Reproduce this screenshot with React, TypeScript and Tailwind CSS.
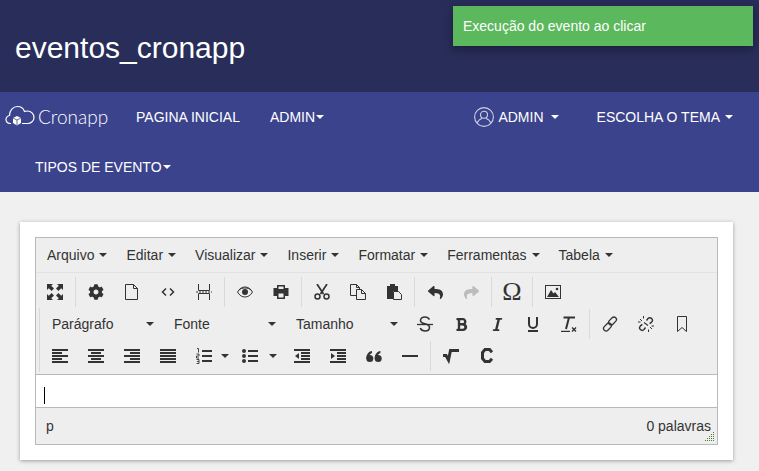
import React from "react";
import { FaCog, FaBold, FaItalic, FaReply } from "react-icons/fa";

const S = ({ children }: { children: React.ReactNode }) => (
  <svg viewBox="0 0 16 16" width={16} height={16} fill="currentColor" className="block">
    {children}
  </svg>
);

const Caret = ({ cls = "" }: { cls?: string }) => (
  <span className={`inline-block w-0 h-0 border-x-[4px] border-x-transparent border-t-[4px] ${cls}`} />
);

const Fullscreen = () => (
  <S>
    {[0, 90, 180, 270].map((r) => (
      <path key={r} transform={`rotate(${r} 8 8)`} d="M0 0h6L4.200 1.800 7 4.600 4.600 7 1.800 4.200 0 6z" />
    ))}
  </S>
);
const NewDoc = () => (
  <S>
    <path d="M1.500.5h8l4 4v11h-12zM9.500.5v4h4" fill="none" stroke="currentColor" />
  </S>
);
const Code = () => (
  <S>
    <path d="M6 4.500 2.500 8 6 11.500M10 4.500 13.500 8 10 11.500" fill="none" stroke="currentColor" strokeWidth="1.500" />
  </S>
);
const PageBreak = () => (
  <S>
    <path d="M2.500 0v6.500h11V0M2.500 16V9.500h11V16" fill="none" stroke="currentColor" />
    <path d="M0 8h16" stroke="currentColor" strokeDasharray="2 1" fill="none" />
  </S>
);
const Eye = () => (
  <S>
    <path d="M.5 8C2.500 4.500 5 3 8 3s5.500 1.500 7.500 5c-2 3.500-4.500 5-7.500 5S2.500 11.500.5 8z" fill="none" stroke="currentColor" />
    <path d="M1.500 6.500C3.500 4.500 5.500 4 8 4s4.500.5 6.500 2.500" fill="none" stroke="currentColor" />
    <circle cx="8" cy="8" r="3" />
  </S>
);
const Print = () => (
  <S>
    <path d="M4 1h8v3h3.500v8H12v3H4v-3H.5V4H4zM5.500 2.500V5h5V2.500zM5.500 9.500v4h5v-4z" fillRule="evenodd" />
  </S>
);
const Cut = () => (
  <S>
    <path d="M3 0 9.500 10M13 0 6.500 10" stroke="currentColor" strokeWidth="1.700" fill="none" />
    <circle cx="3.500" cy="12.500" r="2.500" fill="none" stroke="currentColor" strokeWidth="1.500" />
    <circle cx="12.500" cy="12.500" r="2.500" fill="none" stroke="currentColor" strokeWidth="1.500" />
  </S>
);
const Copy = () => (
  <S>
    <path d="M.5.5h6l3 3v8h-9zM6.500.5v3h3" fill="none" stroke="currentColor" />
    <path d="M6.500 5.500h5l4 4v6h-9zM11.500 5.500v4h4" fill="#eeeeee" stroke="currentColor" />
  </S>
);
const Paste = () => (
  <S>
    <path d="M1 2h3V0h5v2h3v5H7v8H1z" />
    <path d="M7.500 7.500h5l3 3v5h-8z" fill="#eeeeee" stroke="currentColor" />
  </S>
);
const Redo = () => (
  <span className="block -scale-x-100">
    <FaReply size={15} />
  </span>
);
const ImageIco = () => (
  <S>
    <rect x=".5" y="1.500" width="15" height="13" fill="none" stroke="currentColor" />
    <path d="M2 13 6 6l2.500 3.500L10 8l4 5z" />
    <circle cx="12" cy="5" r="1.300" />
  </S>
);
const Strike = () => (
  <S>
    <path d="M12.500 3.500C11.500 1.800 9.800 1 8 1 5.500 1 3.500 2.300 3.500 4.400 3.500 6 4.800 7 8 7.800c3 .8 4.500 1.800 4.500 3.800C12.500 13.800 10.500 15 8 15c-2 0-3.800-.9-4.800-2.800" fill="none" stroke="currentColor" strokeWidth="1.600" />
    <path d="M0 8.500h16" stroke="currentColor" strokeWidth="1.300" />
  </S>
);
const Under = () => (
  <S>
    <path d="M4 1v7a4 4 0 0 0 8 0V1" fill="none" stroke="currentColor" strokeWidth="2" />
    <path d="M3 15h10" stroke="currentColor" strokeWidth="2" />
  </S>
);
const ClearFmt = () => (
  <S>
    <path d="M2.500 1.500H14M8 1.500 5 13" stroke="currentColor" strokeWidth="2" fill="none" />
    <path d="M0 15.500h9" stroke="currentColor" strokeWidth="1.500" />
    <path d="M11 11.500l4 4M15 11.500l-4 4" stroke="currentColor" strokeWidth="1.400" />
  </S>
);
const Chain = () => (
  <S>
    <rect x="8" y="0.500" width="5" height="9" rx="2.500" transform="rotate(45 10.500 5)" fill="none" stroke="currentColor" strokeWidth="1.300" />
    <rect x="3" y="6.500" width="5" height="9" rx="2.500" transform="rotate(45 5.500 11)" fill="none" stroke="currentColor" strokeWidth="1.300" />
  </S>
);
const Unchain = () => (
  <S>
    <path d="M8.500 4.500l1.500-2a2.500 2.500 0 0 1 3.600 3.600l-2 1.500M7.500 11.500l-1.500 2a2.500 2.500 0 0 1-3.600-3.600l2-1.500" fill="none" stroke="currentColor" strokeWidth="1.400" />
    <path d="M6 6.500l4 3" stroke="currentColor" strokeWidth="1.200" />
    <path d="M2 3l2 2M5.500 0v2.500M0 6h2.500M14 13l-2-2M10.500 16v-2.500M16 10h-2.500" stroke="currentColor" strokeWidth="1" fill="none" />
  </S>
);
const Bookmark = () => (
  <S>
    <path d="M3.500.5h9v15L8 11.500l-4.500 4z" fill="none" stroke="currentColor" />
  </S>
);
const Lines = ({ rows }: { rows: [number, number][] }) => (
  <S>
    {rows.map(([x, w], i) => (
      <rect key={i} x={x} y={1 + i * 3} width={w} height={2} />
    ))}
  </S>
);
const AlignL = () => <Lines rows={[[0, 16], [0, 10], [0, 16], [0, 10], [0, 16]]} />;
const AlignC = () => <Lines rows={[[0, 16], [3, 10], [0, 16], [3, 10], [0, 16]]} />;
const AlignR = () => <Lines rows={[[0, 16], [6, 10], [0, 16], [6, 10], [0, 16]]} />;
const AlignJ = () => <Lines rows={[[0, 16], [0, 16], [0, 16], [0, 16], [0, 16]]} />;
const NumList = () => (
  <S>
    <rect x="6" y="2" width="10" height="2" />
    <rect x="6" y="7" width="10" height="2" />
    <rect x="6" y="12" width="10" height="2" />
    <path d="M1 .5h1.500v4M.5 6h2.500v2H.5v2h2.500M.5 11.500h2.500v4H.5M1 13.500h2" fill="none" stroke="currentColor" strokeWidth=".9" />
  </S>
);
const BulList = () => (
  <S>
    <rect x="6" y="2" width="10" height="2" />
    <rect x="6" y="7" width="10" height="2" />
    <rect x="6" y="12" width="10" height="2" />
    <circle cx="2" cy="3" r="2" />
    <circle cx="2" cy="8" r="2" />
    <circle cx="2" cy="13" r="2" />
  </S>
);
const Outdent = () => (
  <S>
    <rect x="0" y="1" width="16" height="2" />
    <rect x="7" y="4" width="9" height="2" />
    <rect x="7" y="7" width="9" height="2" />
    <rect x="7" y="10" width="9" height="2" />
    <rect x="0" y="13" width="16" height="2" />
    <path d="M5 5v6L1 8z" />
  </S>
);
const Indent = () => (
  <S>
    <rect x="0" y="1" width="16" height="2" />
    <rect x="7" y="4" width="9" height="2" />
    <rect x="7" y="7" width="9" height="2" />
    <rect x="7" y="10" width="9" height="2" />
    <rect x="0" y="13" width="16" height="2" />
    <path d="M1 5v6l4-3z" />
  </S>
);
const Hr = () => (
  <S>
    <rect x="0" y="7" width="16" height="2" />
  </S>
);
const Quote = () => (
  <S>
    <circle cx="3.800" cy="10.500" r="3.500" />
    <circle cx="12.200" cy="10.500" r="3.500" />
    <path d="M.3 10.500C.3 6.500 2.500 3.500 6 3v2C4 5.500 3 7.500 3 10zM8.700 10.500C8.700 6.500 10.900 3.500 14.400 3v2C12.400 5.500 11.400 7.500 11.400 10z" />
  </S>
);
const Sqrt = () => (
  <S>
    <path d="M0 7.500h3L5.500 12 7.500 2.500H16" fill="none" stroke="currentColor" strokeWidth="3" />
  </S>
);
const CBold = () => (
  <S>
    <path d="M13 4.300 10.500 1.500H6L3.500 4.500v6L6 13.500h4.500l2.500-2.800" fill="none" stroke="currentColor" strokeWidth="3" />
  </S>
);

const Btn = ({ children, cls = "text-[#333]" }: { children: React.ReactNode; cls?: string }) => (
  <button className={`w-9 h-8 flex items-center justify-center ${cls}`}>{children}</button>
);

const Group = ({ children, last = false }: { children: React.ReactNode; last?: boolean }) => (
  <div className={`flex px-[2px] my-[1px] h-[30px] items-center ${last ? "" : "border-r border-[#d9d9d9]"}`}>
    {children}
  </div>
);

const ListBox = ({ label }: { label: string }) => (
  <div className="w-[122px] h-8 flex items-center justify-between pl-2 pr-[12px] text-[14px] text-[#333]">
    <span>{label}</span>
    <Caret cls="border-t-[#333]" />
  </div>
);

const menus = ["Arquivo", "Editar", "Visualizar", "Inserir", "Formatar", "Ferramentas", "Tabela"];

const NavLink = ({ children, caret }: { children: React.ReactNode; caret?: boolean }) => (
  <a className="flex items-center text-[14px] text-white uppercase">
    {children}
    {caret && <Caret cls="ml-[1px] border-t-white" />}
  </a>
);

export default function App() {
  return (
    <div className="relative min-h-screen bg-[#f0f0f0] font-['Liberation_Sans',Arial,sans-serif] overflow-hidden">
      <header className="h-[92px] bg-[#282d59] flex items-center pl-[15px] text-white text-[30px]">
        <h1 className="mt-[2px]">eventos_cronapp</h1>
      </header>

      <div className="absolute left-[453px] top-[6px] w-[300px] h-10 bg-[#5cb85c] text-white text-[14px] flex items-center px-[10px] shadow-[0_3px_8px_rgba(0,0,0,0.35)]">
        Execução do evento ao clicar
      </div>

      <nav className="h-[100px] bg-[#3b438d]">
        <div className="h-[50px] flex items-center">
          <div className="flex items-center pl-[5px] text-white w-[136px]">
            <svg viewBox="0 0 30 22" width={30} height={22} fill="none" stroke="#fff" strokeWidth="1.200" className="mt-[-3px]">
              <path d="M6 18.500H5C2.500 18.500 1 16.500 1 14.500 1 12.500 2.500 11 4.500 10.500 4.500 5.500 8 1.500 12.500 1.500 16 1.500 18.500 3.500 19.500 6.500 20.500 6 21.500 6 22.500 6 26 6 29 9 29 12.500 29 16 26 18.500 22.500 18.500H17" />
              <path d="M12 11 16 13v5l-4 2.500L8 18v-5z" fill="#fff" stroke="none" />
              <path d="M8 13l4 2 4-2M12 15v5.500" stroke="#3b438d" strokeWidth=".8" />
            </svg>
            <span className="ml-[3px] text-[19px] font-['Lato',sans-serif] font-light">Cronapp</span>
          </div>
          <NavLink>Pagina Inicial</NavLink>
          <div className="ml-[30px]">
            <NavLink caret>Admin</NavLink>
          </div>
          <div className="ml-auto flex items-center pr-[26px]">
            <svg viewBox="0 0 20 20" width={20} height={20} fill="none" stroke="#cfd0e4" strokeWidth="1.100">
              <circle cx="10" cy="10" r="9.400" />
              <circle cx="10" cy="7.800" r="3.500" />
              <path d="M3.500 16c.6-3 3-4 4.500-4.500M16.500 16c-.6-3-3-4-4.500-4.500" />
            </svg>
            <span className="ml-[4px] text-[14px] text-white">ADMIN</span>
            <Caret cls="ml-[7px] border-t-white" />
            <span className="ml-[38px] text-[14px] text-white">ESCOLHA O TEMA</span>
            <Caret cls="ml-[5px] border-t-white" />
          </div>
        </div>
        <div className="h-[50px] flex items-center pl-[35px]">
          <NavLink caret>Tipos de Evento</NavLink>
        </div>
      </nav>

      <main className="pt-[30px] px-[20px]">
        <div className="bg-white w-[713px] p-[15px] shadow-[0_1px_4px_rgba(0,0,0,0.35)]">
          <div className="border border-[#b9b9b9] bg-[#eeeeee] text-[#333]">
            <div className="h-[35px] flex items-center border-b border-[#e2e2e2] pl-[11px] text-[14px] gap-[19px]">
              {menus.map((m) => (
                <span key={m} className="flex items-center">
                  {m}
                  <Caret cls="ml-[5px] border-t-[#333]" />
                </span>
              ))}
            </div>
            <div className="h-[101px]">
              <div className="flex -ml-[1px] pt-[3px] h-[35px]">
                <Group><Btn><Fullscreen /></Btn></Group>
                <Group>
                  <Btn><FaCog size={16} /></Btn>
                  <Btn><NewDoc /></Btn>
                  <Btn><Code /></Btn>
                  <Btn><PageBreak /></Btn>
                </Group>
                <Group>
                  <Btn><Eye /></Btn>
                  <Btn><Print /></Btn>
                </Group>
                <Group>
                  <Btn><Cut /></Btn>
                  <Btn><Copy /></Btn>
                  <Btn><Paste /></Btn>
                </Group>
                <Group>
                  <Btn><FaReply size={15} /></Btn>
                  <Btn cls="text-[#bcbcbc]"><Redo /></Btn>
                </Group>
                <Group>
                  <Btn><span className="font-['Liberation_Serif',serif] text-[26px] leading-none">Ω</span></Btn>
                </Group>
                <Group last><Btn><ImageIco /></Btn></Group>
              </div>
              <div className="flex ml-[3px] h-8">
                <div className="flex border-l border-[#d9d9d9] pl-[4px] h-[32px] items-center">
                  <ListBox label="Parágrafo" />
                  <ListBox label="Fonte" />
                  <ListBox label="Tamanho" />
                </div>
                <div className="flex h-[30px] my-[1px] items-center border-r border-[#d9d9d9] -ml-[3px] pr-[2px]">
                  <Btn><Strike /></Btn>
                  <Btn><FaBold size={15} /></Btn>
                  <Btn><FaItalic size={15} /></Btn>
                  <Btn><Under /></Btn>
                  <Btn><ClearFmt /></Btn>
                </div>
                <div className="flex h-[30px] my-[1px] items-center pl-[2px]">
                  <Btn><Chain /></Btn>
                  <Btn><Unchain /></Btn>
                  <Btn><Bookmark /></Btn>
                </div>
              </div>
              <div className="flex ml-[3px] h-8">
                <div className="flex border-l border-[#d9d9d9] pl-[2px] h-[32px] items-center">
                  <Btn><AlignL /></Btn>
                  <Btn><AlignC /></Btn>
                  <Btn><AlignR /></Btn>
                  <Btn><AlignJ /></Btn>
                  <button className="w-[46px] h-8 flex items-center pl-[10px]">
                    <NumList />
                    <Caret cls="ml-[9px] border-t-[#333]" />
                  </button>
                  <button className="w-[52px] h-8 flex items-center pl-[10px]">
                    <BulList />
                    <Caret cls="ml-[11px] border-t-[#333]" />
                  </button>
                  <Btn><Outdent /></Btn>
                  <Btn><Indent /></Btn>
                  <Btn><Quote /></Btn>
                  <Btn><Hr /></Btn>
                </div>
                <div className="flex h-[30px] my-[1px] items-center border-l border-[#d9d9d9] ml-[2px] pl-[2px]">
                  <Btn><Sqrt /></Btn>
                  <Btn><CBold /></Btn>
                </div>
              </div>
            </div>
            <div className="h-[34px] bg-white border-y border-[#b9b9b9] flex items-center pl-[8px]">
              <span className="block w-px h-[17px] bg-black mt-[9px]" />
            </div>
            <div className="relative h-[36px] flex items-center justify-between pl-[10px] pr-[6px] text-[14px] text-[#333]">
              <span>p</span>
              <span>0 palavras</span>
              <svg viewBox="0 0 10 10" width={10} height={10} className="absolute right-[2px] bottom-[2px]" fill="#4f7a3a">
                {[[8, 0], [6, 2], [8, 2], [4, 4], [6, 4], [8, 4], [2, 6], [4, 6], [6, 6], [8, 6], [0, 8], [2, 8], [4, 8], [6, 8], [8, 8]].map(([x, y], i) => (
                  <rect key={i} x={x} y={y} width={1} height={1} />
                ))}
              </svg>
            </div>
          </div>
        </div>
      </main>
    </div>
  );
}
